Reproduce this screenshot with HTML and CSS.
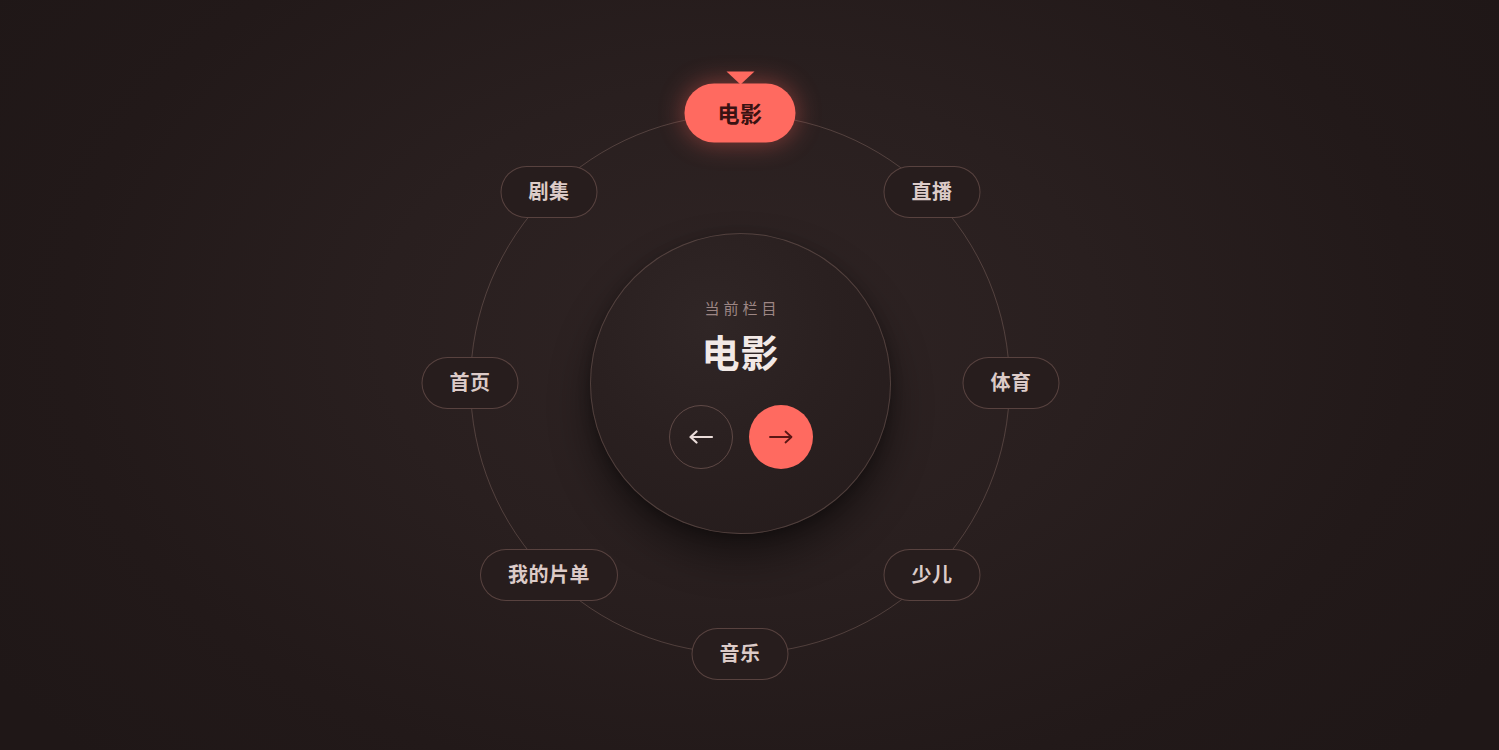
FILE: index.html
```html
<!DOCTYPE html>
<html lang="zh">
<head>
<meta charset="utf-8">
<title>频道轮盘</title>
<link rel="stylesheet" href="styles.css">
</head>
<body>
<main class="stage">
  <div class="wheel">
    <div class="ring"></div>
    <ul class="items">
      <li class="item pos-n"><span class="pill active">电影</span></li>
      <li class="item pos-ne"><span class="pill">直播</span></li>
      <li class="item pos-e"><span class="pill">体育</span></li>
      <li class="item pos-se"><span class="pill">少儿</span></li>
      <li class="item pos-s"><span class="pill">音乐</span></li>
      <li class="item pos-sw"><span class="pill">我的片单</span></li>
      <li class="item pos-w"><span class="pill">首页</span></li>
      <li class="item pos-nw"><span class="pill">剧集</span></li>
    </ul>
    <div class="hub">
      <div class="hub-label">当前栏目</div>
      <div class="hub-title">电影</div>
      <div class="hub-buttons">
        <button class="nav-btn prev" aria-label="上一个">
          <svg width="26" height="14" viewBox="0 0 26 14"><path d="M24 7H3M8.5 1.5L2.5 7l6 5.5" fill="none" stroke="currentColor" stroke-width="2.2" stroke-linecap="round" stroke-linejoin="round"/></svg>
        </button>
        <button class="nav-btn next" aria-label="下一个">
          <svg width="26" height="14" viewBox="0 0 26 14"><path d="M2 7h21M17.5 1.5l6 5.5-6 5.5" fill="none" stroke="currentColor" stroke-width="1.8" stroke-linecap="round" stroke-linejoin="round"/></svg>
        </button>
      </div>
    </div>
  </div>
</main>
</body>
</html>
```
FILE: styles.css
```css
* { box-sizing: border-box; }
html, body {
  margin: 0;
  padding: 0;
  height: 100%;
}
body {
  background: radial-gradient(ellipse 900px 620px at 740px 330px, #2f2424 0%, #291f1f 40%, #221919 75%, #1f1717 100%);
  font-family: "Noto Sans CJK SC", "Noto Sans", sans-serif;
  overflow: hidden;
}
.stage {
  width: 1499px;
  height: 750px;
  display: flex;
  justify-content: center;
  padding: 114px 19px 0 0;
}
.wheel {
  position: relative;
  width: 540px;
  height: 540px;
}
.ring {
  position: absolute;
  inset: 0;
  border-radius: 50%;
  border: 1px solid rgba(215, 170, 160, 0.24);
}
.items {
  list-style: none;
  margin: 0;
  padding: 0;
}
.item {
  position: absolute;
  transform: translate(-50%, -50%);
}
.pos-n  { left: 270px; top: 0; }
.pos-ne { left: 462px; top: 78px; }
.pos-e  { left: 541px; top: 269px; }
.pos-se { left: 462px; top: 461px; }
.pos-s  { left: 270px; top: 540px; }
.pos-sw { left: 79px;  top: 461px; }
.pos-w  { left: 0;     top: 269px; }
.pos-nw { left: 79px;  top: 78px; }

.pill {
  display: flex;
  align-items: center;
  justify-content: center;
  height: 52px;
  padding: 0 27px 3px;
  border-radius: 26px;
  border: 1px solid rgba(215, 165, 155, 0.28);
  background: #271d1d;
  color: #dccbc8;
  font-size: 20px;
  font-weight: 700;
  white-space: nowrap;
  letter-spacing: 0.5px;
}
.pill.active {
  position: relative;
  height: 59px;
  padding: 0 33px 4px;
  border-radius: 30px;
  border: none;
  background: #ff6a60;
  color: #3a1212;
  font-size: 22px;
  box-shadow: 0 0 26px rgba(255, 100, 90, 0.45);
  top: -1px;
}
.pill.active::before {
  content: "";
  position: absolute;
  left: 50%;
  top: -12px;
  margin-left: -14px;
  border-left: 14px solid transparent;
  border-right: 14px solid transparent;
  border-top: 13px solid #ff6a60;
}

.hub {
  position: absolute;
  left: 120px;
  top: 119px;
  width: 301px;
  height: 301px;
  border-radius: 50%;
  border: 1px solid rgba(215, 170, 160, 0.24);
  background: radial-gradient(circle at 40% 30%, #302626 0%, #2a2020 45%, #241b1b 100%);
  box-shadow: 0 22px 40px rgba(0, 0, 0, 0.45), 0 4px 12px rgba(0, 0, 0, 0.25);
  display: flex;
  flex-direction: column;
  align-items: center;
  justify-content: center;
}
.hub-label {
  font-size: 15px;
  line-height: 18px;
  letter-spacing: 4px;
  padding-left: 4px;
  color: #9d8684;
}
.hub-title {
  margin-top: 12px;
  font-size: 38px;
  line-height: 44px;
  font-weight: 700;
  color: #f2e9e6;
  letter-spacing: 1px;
}
.hub-buttons {
  margin-top: 32px;
  display: flex;
  gap: 16px;
}
.nav-btn {
  width: 64px;
  height: 64px;
  border-radius: 50%;
  display: flex;
  align-items: center;
  justify-content: center;
  padding: 0;
  cursor: pointer;
}
.nav-btn.prev {
  background: transparent;
  border: 1px solid rgba(215, 165, 155, 0.3);
  color: #eadcd9;
}
.nav-btn.next {
  background: #ff6a60;
  border: none;
  color: #5a1614;
}
```
